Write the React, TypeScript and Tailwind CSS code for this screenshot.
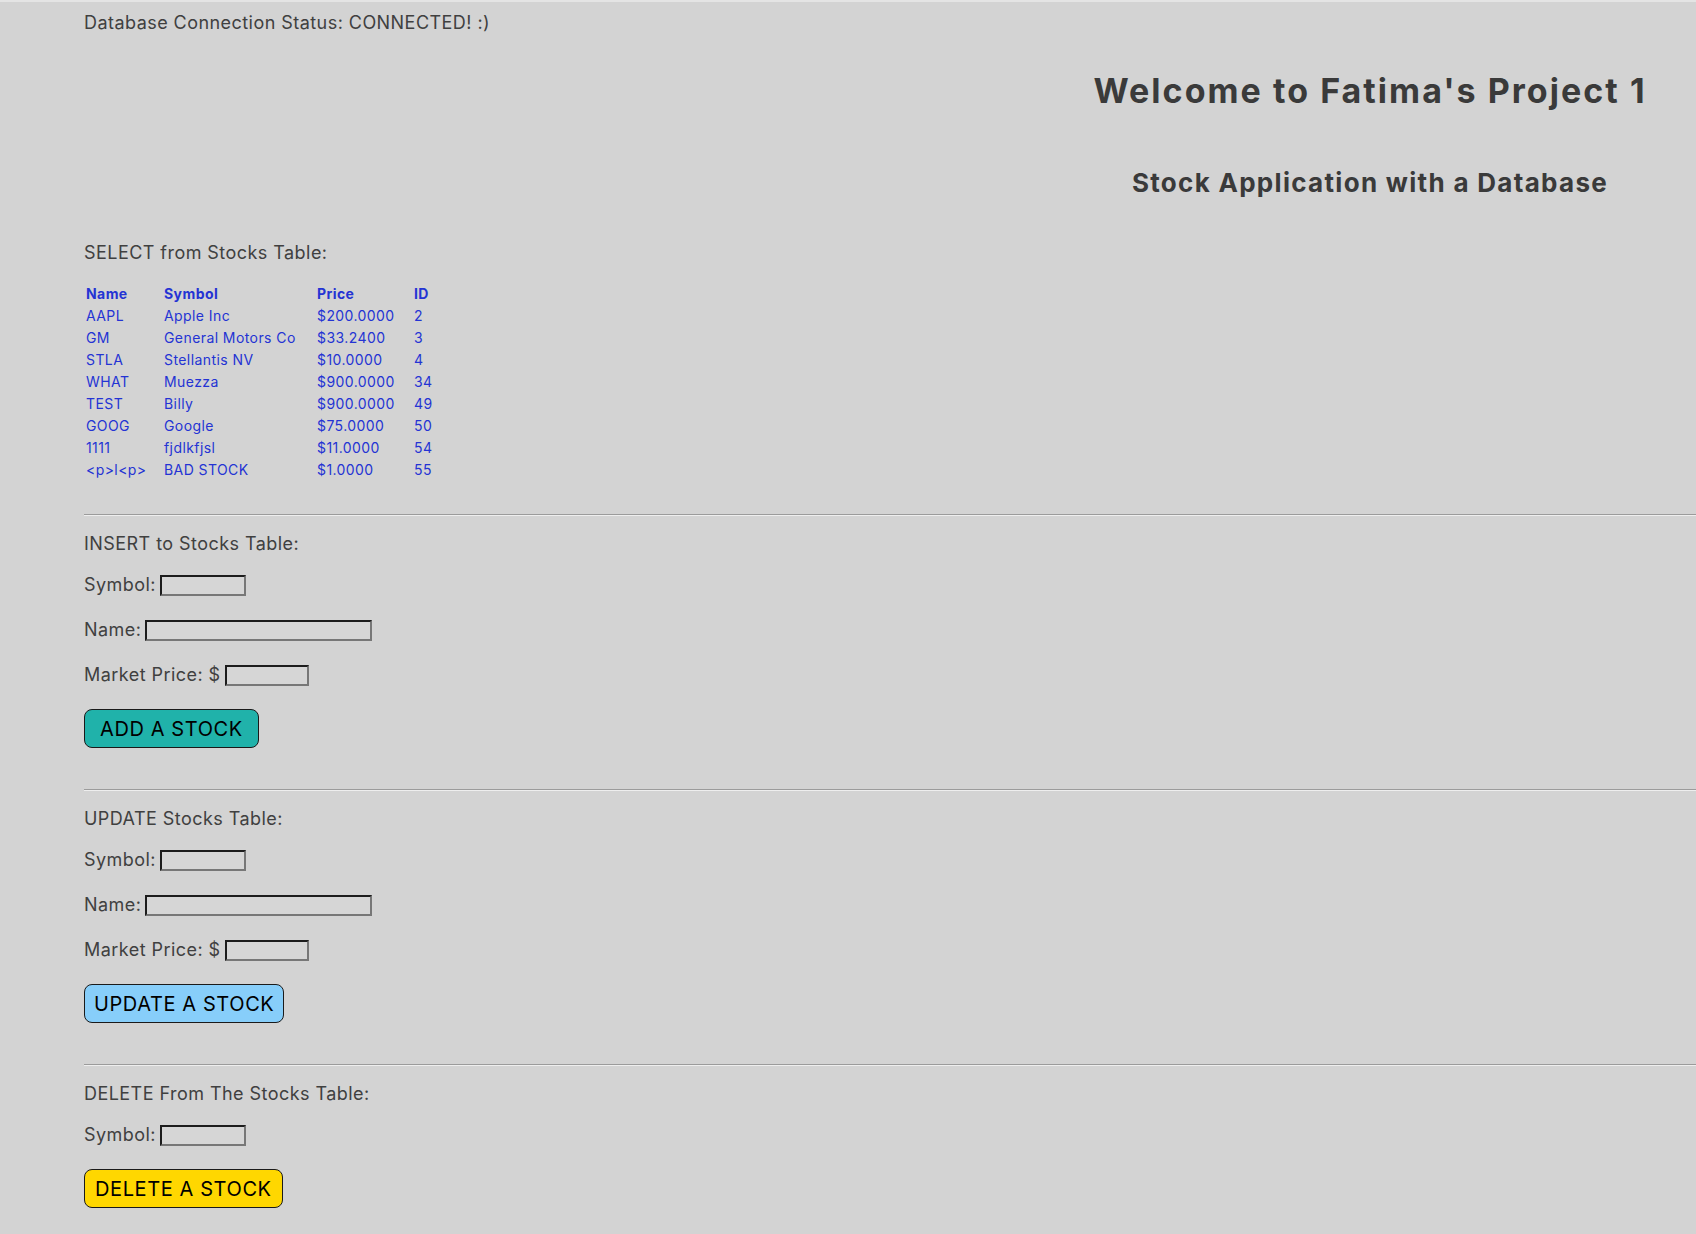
import React from 'react';

const stocks = [
  { name: 'AAPL', symbol: 'Apple Inc', price: '$200.0000', id: '2' },
  { name: 'GM', symbol: 'General Motors Co', price: '$33.2400', id: '3' },
  { name: 'STLA', symbol: 'Stellantis NV', price: '$10.0000', id: '4' },
  { name: 'WHAT', symbol: 'Muezza', price: '$900.0000', id: '34' },
  { name: 'TEST', symbol: 'Billy', price: '$900.0000', id: '49' },
  { name: 'GOOG', symbol: 'Google', price: '$75.0000', id: '50' },
  { name: '1111', symbol: 'fjdlkfjsl', price: '$11.0000', id: '54' },
  { name: '<p>l<p>', symbol: 'BAD STOCK', price: '$1.0000', id: '55' },
];

const Field: React.FC<{ label: string; width: string; first?: boolean }> = ({ label, width, first }) => (
  <div className={`flex items-center h-6 ${first ? 'mt-[17px]' : 'mt-[21px]'}`}>
    <span>{label}</span>
    <input
      type="text"
      className={`ml-1 h-[21px] ${width} bg-[#d6d6d6] border-2 border-t-[#1c1c1c] border-l-[#1c1c1c] border-b-[#777] border-r-[#777] outline-none`}
    />
  </div>
);

const Divider = () => <div className="mt-[41px] border-t border-b border-t-[#9b9b9b] border-b-[#eeeeee]" />;

export default function App() {
  return (
    <div
      className="min-h-[1234px] bg-[#d3d3d3] border-t-2 border-[#e4e4e4] pl-[84px] pb-10 text-[18px] leading-6 tracking-[0.025em] text-[#404040]"
      style={{ fontFamily: 'Inter, "Open Sans", sans-serif' }}
    >
      <p className="pt-[9px]">Database Connection Status: CONNECTED! :)</p>

      <div className="w-[652px] ml-auto text-center text-[#3a3a3a]">
        <h1 className="mt-9 text-[34px] leading-10 font-bold tracking-[0.06em]">Welcome to Fatima's Project 1</h1>
        <h2 className="mt-14 text-[26px] leading-8 font-bold tracking-[0.05em]">Stock Application with a Database</h2>
      </div>

      <p className="mt-[42px]">SELECT from Stocks Table:</p>

      <div className="mt-[18px] text-[14px] leading-[22px] tracking-[0.03em] text-[#2433d4]">
        <div className="grid grid-cols-[78px_153px_97px_40px] pl-[2px] font-bold">
          <span>Name</span>
          <span>Symbol</span>
          <span>Price</span>
          <span>ID</span>
        </div>
        {stocks.map((s) => (
          <div key={s.id} className="grid grid-cols-[78px_153px_97px_40px] pl-[2px]">
            <span>{s.name}</span>
            <span>{s.symbol}</span>
            <span>{s.price}</span>
            <span>{s.id}</span>
          </div>
        ))}
      </div>

      <div className="mt-[33px] border-t border-b border-t-[#9b9b9b] border-b-[#eeeeee]" />

      <p className="mt-4">INSERT to Stocks Table:</p>
      <Field label="Symbol:" width="w-[86px]" first />
      <Field label="Name:" width="w-[227px]" />
      <Field label="Market Price: $" width="w-[84px]" />
      <button className="mt-[22px] h-[39px] px-[15px] rounded-[8px] border border-[#1a1a1a] bg-[#20b2aa] text-[20px] tracking-[0.03em] text-black">
        ADD A STOCK
      </button>

      <Divider />

      <p className="mt-4">UPDATE Stocks Table:</p>
      <Field label="Symbol:" width="w-[86px]" first />
      <Field label="Name:" width="w-[227px]" />
      <Field label="Market Price: $" width="w-[84px]" />
      <button className="mt-[22px] h-[39px] px-[9px] rounded-[8px] border border-[#1a1a1a] bg-[#87cefa] text-[20px] tracking-[0.03em] text-black">
        UPDATE A STOCK
      </button>

      <Divider />

      <p className="mt-4">DELETE From The Stocks Table:</p>
      <Field label="Symbol:" width="w-[86px]" first />
      <button className="mt-[22px] h-[39px] px-[10px] rounded-[8px] border border-[#1a1a1a] bg-[#ffd700] text-[20px] tracking-[0.03em] text-black">
        DELETE A STOCK
      </button>
    </div>
  );
}
